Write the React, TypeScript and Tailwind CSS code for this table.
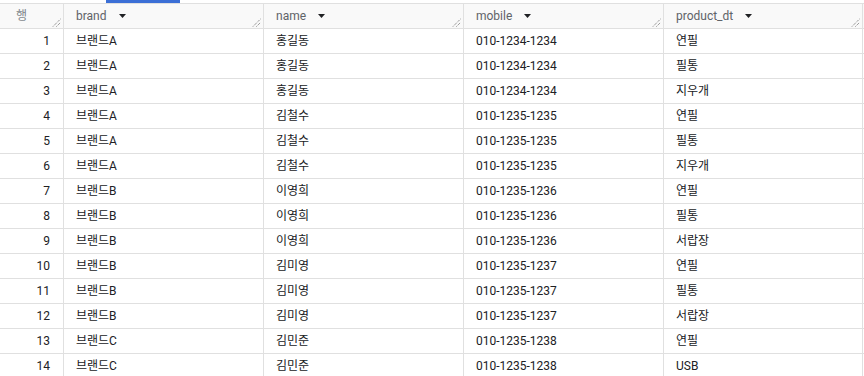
import React from "react";

const rows: [string, string, string, string][] = [
  ["브랜드A", "홍길동", "010-1234-1234", "연필"],
  ["브랜드A", "홍길동", "010-1234-1234", "필통"],
  ["브랜드A", "홍길동", "010-1234-1234", "지우개"],
  ["브랜드A", "김철수", "010-1235-1235", "연필"],
  ["브랜드A", "김철수", "010-1235-1235", "필통"],
  ["브랜드A", "김철수", "010-1235-1235", "지우개"],
  ["브랜드B", "이영희", "010-1235-1236", "연필"],
  ["브랜드B", "이영희", "010-1235-1236", "필통"],
  ["브랜드B", "이영희", "010-1235-1236", "서랍장"],
  ["브랜드B", "김미영", "010-1235-1237", "연필"],
  ["브랜드B", "김미영", "010-1235-1237", "필통"],
  ["브랜드B", "김미영", "010-1235-1237", "서랍장"],
  ["브랜드C", "김민준", "010-1235-1238", "연필"],
  ["브랜드C", "김민준", "010-1235-1238", "USB"],
];

const columns = ["brand", "name", "mobile", "product_dt"];

const gridCols = "grid grid-cols-[64px_200px_200px_200px_199px]";

// little diagonal resize grip in header corner
const Grip = () => (
  <svg width="9" height="9" viewBox="0 0 9 9" className="absolute right-[2px] bottom-[1px]">
    <line x1="1" y1="8.5" x2="8.5" y2="1" stroke="#6b6b6b" strokeWidth="1" strokeDasharray="1 1" />
    <line x1="4.5" y1="8.5" x2="8.5" y2="4.5" stroke="#6b6b6b" strokeWidth="1" strokeDasharray="1 1" />
  </svg>
);

const SortArrow = () => (
  <svg width="7" height="4" viewBox="0 0 7 4" className="ml-[12px]">
    <path d="M0 0h7L3.5 4z" fill="#202124" />
  </svg>
);

export default function App() {
  return (
    <div
      className="w-[864px] h-[376px] overflow-hidden bg-white text-[12px] text-[#202124]"
      style={{ fontFamily: "Roboto, 'Noto Sans CJK KR', sans-serif" }}
    >
      <div className="h-[3px] pl-[106px]">
        <div className="h-[3px] w-[74px] bg-[#3b6fd6]" />
      </div>

      {/* header */}
      <div className={`${gridCols} h-[26px] border-y border-[#e0e0e0] bg-[#f9f9f9]`}>
        <div className="relative flex items-center pl-[16px] border-r border-[#e0e0e0] text-[#80868b]">
          행
          <Grip />
        </div>
        {columns.map((c) => (
          <div
            key={c}
            className="relative flex items-center pl-[12px] border-r border-[#e0e0e0] text-[#5f6368]"
          >
            {c}
            <SortArrow />
            <Grip />
          </div>
        ))}
      </div>

      {rows.map((r, i) => (
        <div key={i} className={`${gridCols} h-[25px] border-b border-[#e0e0e0]`}>
          <div className="flex items-center justify-end pr-[13px] border-r border-[#e0e0e0]">
            {i + 1}
          </div>
          {r.map((v, j) => (
            <div key={j} className="flex items-center pl-[12px] border-r border-[#e0e0e0]">
              {v}
            </div>
          ))}
        </div>
      ))}
    </div>
  );
}
